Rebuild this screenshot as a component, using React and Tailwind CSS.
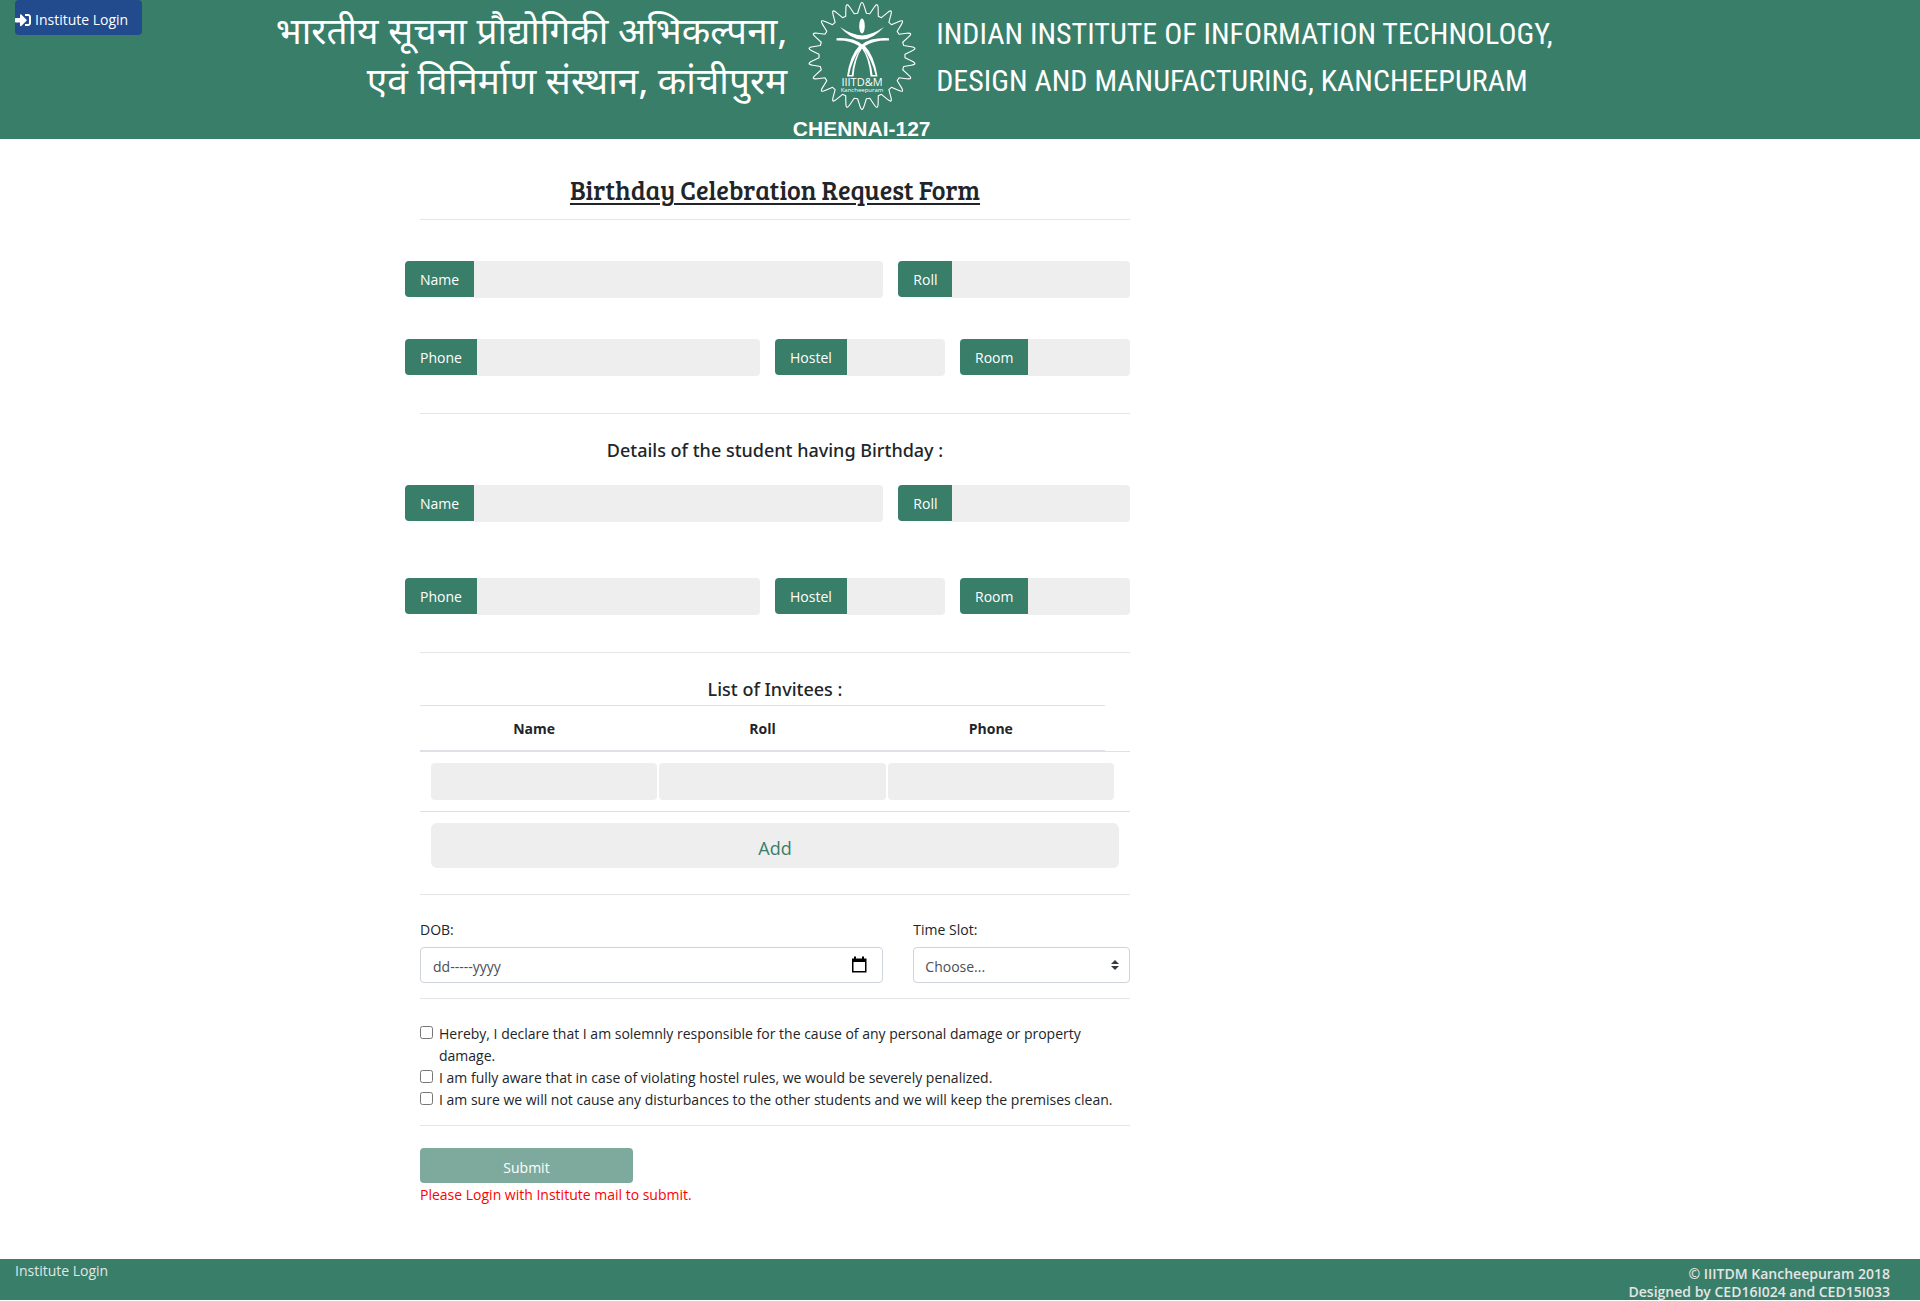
import { FaSignInAlt } from "react-icons/fa";

const TEETH = 22;

function gearPath(cx, cy, outer, inner) {
  const step = (Math.PI * 2) / TEETH;
  const at = (angle, r) =>
    `${(cx + Math.sin(angle) * r).toFixed(2)} ${(cy - Math.cos(angle) * r).toFixed(2)}`;
  let d = "";
  for (let i = 0; i < TEETH; i++) {
    const a = i * step;
    d += `${i ? "L" : "M"}${at(a - step * 0.36, inner)}`;
    d += `L${at(a - step * 0.15, outer - 4)}`;
    d += `Q${at(a, outer + 3)} ${at(a + step * 0.15, outer - 4)}`;
    d += `L${at(a + step * 0.36, inner)}`;
  }
  return d + "Z";
}

function Logo() {
  return (
    <svg viewBox="0 0 110 112" className="h-28 w-[110px] shrink-0" role="img" aria-label="IIITD&M Kancheepuram">
      <path d={gearPath(55, 56, 54, 43)} fill="none" stroke="#fff" strokeWidth="1.1" strokeLinejoin="round" />
      <ellipse cx="55" cy="26" rx="2.8" ry="7.6" fill="#fff" />
      <path d="M33 27Q45 35 55 35.500Q65 35 77 27Q66 39.500 55 39.500Q44 39.500 33 27Z" fill="#fff" />
      <path d="M29.500 38.200Q46 37 55 44.500Q64 37 82 38.200L82 40.400Q66 40 58 46Q67 55 70.500 76.500L63.500 76.500Q62 58 55 48.500Q48 58 46.500 76.500L40 76.500Q43 55 52 46Q44 40 29.500 40.400Z" fill="#fff" />
      <path d="M53 49.500Q45 60 42 75L44.800 75Q46 60 53 49.500ZM57 49.500Q65 60 68.500 75L65.500 75Q64 60 57 49.500Z" fill="#397e69" />
      <text x="55" y="86" textAnchor="middle" fontSize="11" fill="#fff" className="font-['Open_Sans',sans-serif]">IIITD&amp;M</text>
      <text x="55" y="92" textAnchor="middle" fontSize="6" fill="#fff" className="font-['Open_Sans',sans-serif]">Kancheepuram</text>
    </svg>
  );
}

function Header() {
  return (
    <header className="relative flex h-[139px] bg-[#397e69] text-white">
      <button type="button" className="absolute left-[15px] top-0 flex h-[35px] w-[127px] items-center gap-1 rounded-b rounded-t-sm bg-[#224b8d] pt-1 text-sm">
        <FaSignInAlt className="size-4" />
        Institute Login
      </button>
      <div className="w-[41%] pt-2.5 text-right font-['Noto_Sans_Devanagari','Noto_Sans',sans-serif] text-[37px] leading-[50px] whitespace-nowrap">
        <p>भारतीय सूचना प्रौद्योगिकी अभिकल्पना,</p>
        <p>एवं विनिर्माण संस्थान, कांचीपुरम</p>
      </div>
      <div className="flex w-[149px] shrink-0 flex-col items-center">
        <Logo />
        <p className="shrink-0 font-['Liberation_Sans',Arial,sans-serif] text-[21px] leading-[34px] font-bold">CHENNAI-127</p>
      </div>
      <div className="pt-2.5 font-['Arial_Narrow','Roboto_Condensed','Open_Sans_Condensed','Noto_Sans_Condensed','Roboto',sans-serif] text-[30px] leading-[47px] whitespace-nowrap">
        <p>INDIAN INSTITUTE OF INFORMATION TECHNOLOGY,</p>
        <p>DESIGN AND MANUFACTURING, KANCHEEPURAM</p>
      </div>
    </header>
  );
}

function Field({ id, label, className }) {
  return (
    <div className={`flex h-[37px] pr-[15px] ${className}`}>
      <label htmlFor={id} className="flex h-9 items-center rounded-l bg-[#397e69] px-[15px] pt-0.5 text-white">
        {label}
      </label>
      <input id={id} type="text" className="min-w-0 flex-1 rounded-r bg-[#eee] px-3 outline-none" />
    </div>
  );
}

function Person({ prefix, gap }) {
  return (
    <div className={`flex flex-col ${gap}`}>
      <div className="flex">
        <Field id={`${prefix}-name`} label="Name" className="w-2/3" />
        <Field id={`${prefix}-roll`} label="Roll" className="w-1/3" />
      </div>
      <div className="flex">
        <Field id={`${prefix}-phone`} label="Phone" className="w-1/2" />
        <Field id={`${prefix}-hostel`} label="Hostel" className="w-1/4" />
        <Field id={`${prefix}-room`} label="Room" className="w-1/4" />
      </div>
    </div>
  );
}

function Rule({ className = "" }) {
  return <hr className={`mx-[15px] border-t border-[#e5e5e5] ${className}`} />;
}

function SectionTitle({ children }) {
  return <h2 className="text-center font-['Noto_Sans',sans-serif] text-lg leading-6 font-medium">{children}</h2>;
}

function Invitees() {
  return (
    <table className="w-full table-fixed border-separate border-spacing-0">
      <colgroup>
        <col />
        <col />
        <col />
        <col className="w-[25px]" />
      </colgroup>
      <thead>
        <tr className="h-[47px]">
          {["Name", "Roll", "Phone"].map((name) => (
            <th key={name} scope="col" className="border-t border-b-2 border-t-[#dee2e6] border-b-[#dee2e6] pt-0.5 font-bold">
              {name}
            </th>
          ))}
          <td className="border-b border-[#dee2e6]" />
        </tr>
      </thead>
      <tbody>
        <tr>
          <td colSpan={4} className="border-b border-[#dee2e6] py-[11px] pr-4 pl-[11px]">
            <div className="flex gap-0.5">
              {["name", "roll", "phone"].map((name) => (
                <input key={name} type="text" aria-label={`Invitee ${name}`} className="h-[37px] min-w-0 flex-1 rounded bg-[#eee] px-3 outline-none" />
              ))}
            </div>
          </td>
        </tr>
        <tr>
          <td colSpan={4} className="px-[11px] pt-[11px]">
            <button type="button" className="h-[45px] w-full rounded-md bg-[#eee] pt-1 text-lg text-[#397e69]">
              Add
            </button>
          </td>
        </tr>
      </tbody>
    </table>
  );
}

const DECLARATIONS = [
  "Hereby, I declare that I am solemnly responsible for the cause of any personal damage or property damage.",
  "I am fully aware that in case of violating hostel rules, we would be severely penalized.",
  "I am sure we will not cause any disturbances to the other students and we will keep the premises clean.",
];

function DateAndSlot() {
  return (
    <div className="flex">
      <div className="w-2/3 px-[15px]">
        <label htmlFor="dob">DOB:</label>
        <div className="mt-1.5 flex h-9 items-center rounded border border-[#ced4da] px-[15px] pl-3">
          <input id="dob" type="text" placeholder="dd-----yyyy" className="min-w-0 flex-1 pt-1 outline-none placeholder:text-[#495057]" />
          <button type="button" aria-label="Open calendar">
            <svg viewBox="0 0 16 18" className="h-[18px] w-4">
              <path d="M3 0.500h2v2h6v-2h2v2h2.500v14H1v-14h2zM2.500 6v9H14V6z" fill="#000" fillRule="evenodd" />
            </svg>
          </button>
        </div>
      </div>
      <div className="w-1/3 px-[15px]">
        <label htmlFor="slot">Time Slot:</label>
        <div className="relative mt-1.5">
          <select id="slot" className="h-9 w-full appearance-none rounded border border-[#ced4da] bg-white px-[11px] pt-1 text-[#495057]">
            <option>Choose...</option>
          </select>
          <svg viewBox="0 0 8 10" className="pointer-events-none absolute top-[13px] right-[11px] h-2.5 w-2">
            <path d="M4 0L8 4H0zM4 10L0 6H8z" fill="#343a40" />
          </svg>
        </div>
      </div>
    </div>
  );
}

export default function App() {
  return (
    <div className="flex min-h-screen flex-col bg-white font-['Open_Sans','Noto_Sans',sans-serif] text-sm leading-[22px] text-[#212529]">
      <Header />
      <main className="mx-auto w-full max-w-[1110px] flex-1">
        <form className="w-2/3" onSubmit={(e) => e.preventDefault()}>
          <h1 className="mt-[34px] mb-3 text-center font-['Bree_Serif','DejaVu_Serif_Condensed','DejaVu_Serif',serif] text-[26px] leading-[34px] font-normal underline decoration-2 underline-offset-3">
            Birthday Celebration Request Form
          </h1>
          <Rule className="mb-[41px]" />
          <Person prefix="host" gap="gap-[41px]" />
          <Rule className="mt-[37px] mb-6" />
          <SectionTitle>Details of the student having Birthday :</SectionTitle>
          <div className="mt-[23px]">
            <Person prefix="student" gap="gap-14" />
          </div>
          <Rule className="mt-[37px] mb-6" />
          <SectionTitle>List of Invitees :</SectionTitle>
          <div className="mx-[15px] mt-1">
            <Invitees />
          </div>
          <Rule className="mt-[26px] mb-[24px]" />
          <DateAndSlot />
          <Rule className="mt-[15px] mb-6" />
          <div className="px-[15px]">
            {DECLARATIONS.map((text) => (
              <label key={text} className="flex gap-1.5">
                <input type="checkbox" className="mt-[3px] size-[13px] shrink-0" />
                <span>{text}</span>
              </label>
            ))}
          </div>
          <Rule className="mt-[14px] mb-[22px]" />
          <div className="px-[15px]">
            <button type="submit" disabled className="block h-[35px] w-[30%] rounded bg-[#7eaa9e] pt-1 text-white">
              Submit
            </button>
            <p className="pt-px text-[#ff0000]">Please Login with Institute mail to submit.</p>
          </div>
        </form>
      </main>
      <footer className="mb-px flex h-[41px] justify-between bg-[#397e69] px-[15px] text-[#e5e5e5]">
        <a href="#login" className="leading-6">
          Institute Login
        </a>
        <p className="pt-1.5 pr-[15px] text-right leading-[18px] font-semibold whitespace-nowrap">
          © IIITDM Kancheepuram 2018
          <br />
          Designed by CED16I024 and CED15I033
        </p>
      </footer>
    </div>
  );
}
